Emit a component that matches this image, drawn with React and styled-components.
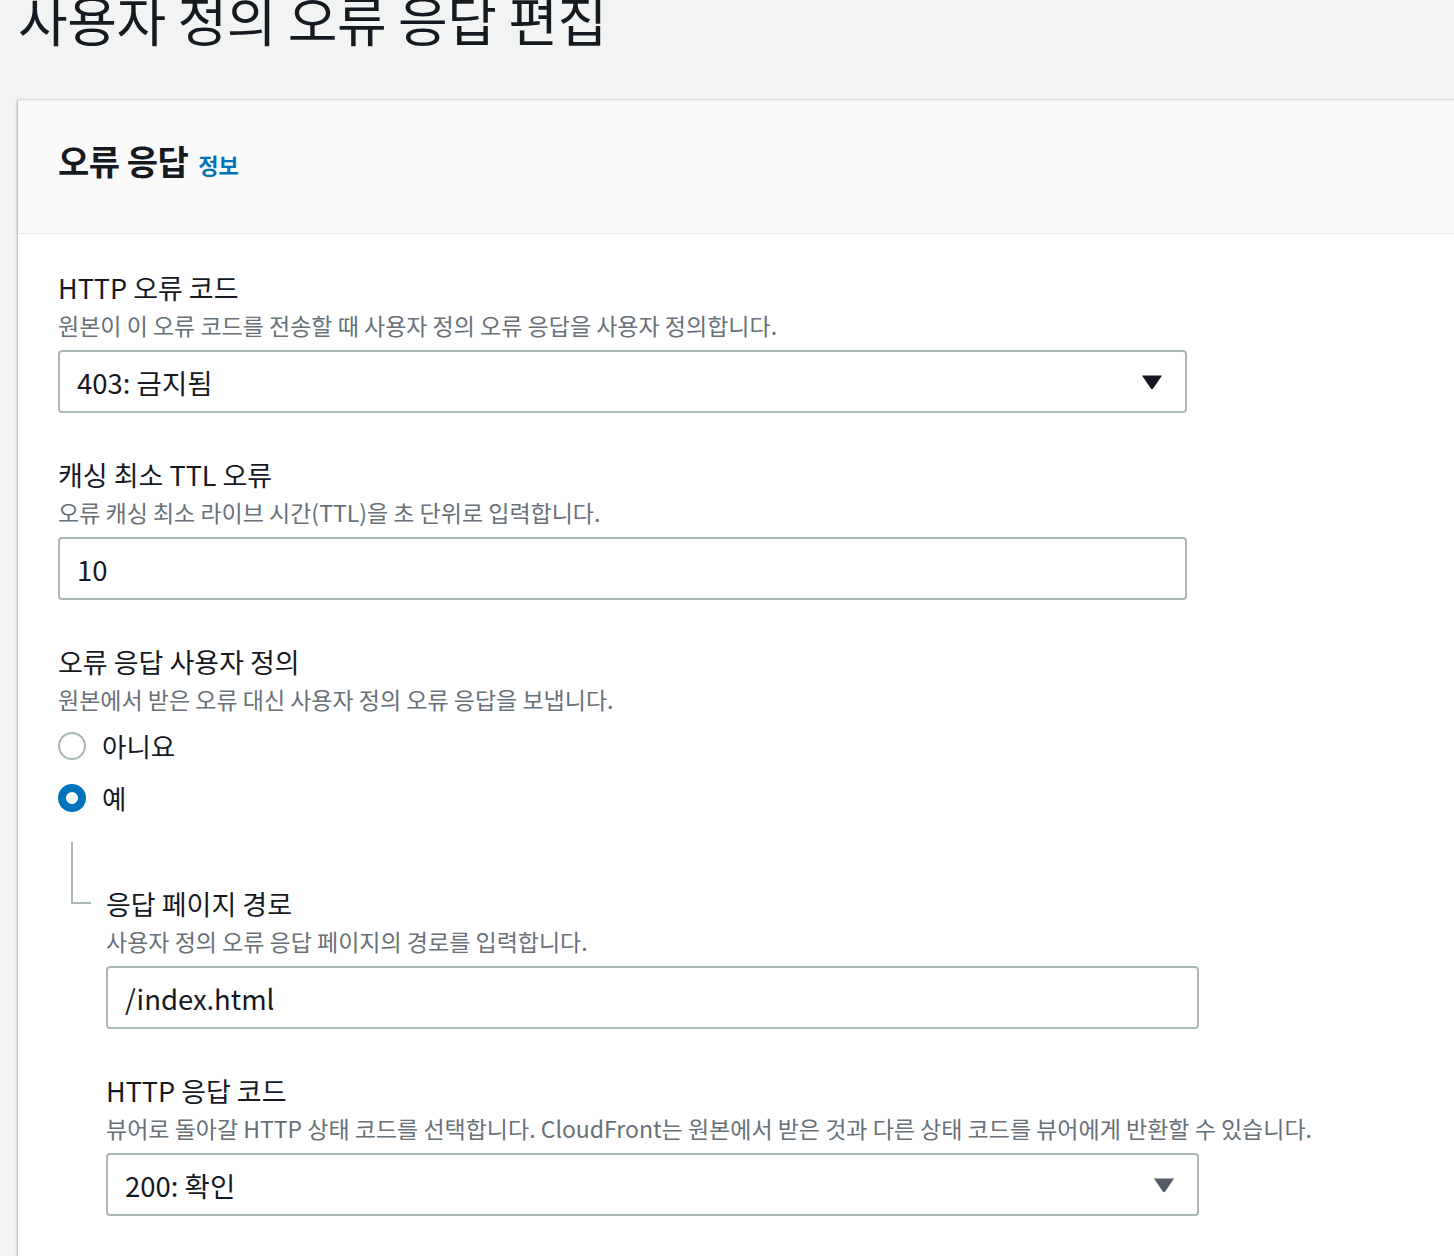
import React from "react";
import styled, { createGlobalStyle } from "styled-components";

const GlobalStyle = createGlobalStyle`
  html, body {
    margin: 0;
    padding: 0;
    background: #f2f3f3;
    overflow: hidden;
    font-family: "Noto Sans CJK KR", "Noto Sans", sans-serif;
    color: #16191f;
  }
`;

const Page = styled.div`
  padding-left: 18px;
  width: 1454px;
  height: 1256px;
  overflow: hidden;
`;

const Title = styled.h1`
  margin: -13px 0 0 0;
  font-size: 54px;
  font-weight: 400;
  line-height: 64px;
  height: 113px;
  letter-spacing: -0.4px;
  white-space: nowrap;
`;

const Card = styled.div`
  width: 1500px;
  background: #ffffff;
  box-shadow: -1px 0 2px rgba(0, 28, 36, 0.3);
  border-top: 1px solid #eaeded;
  padding-bottom: 120px;
`;

const CardHeader = styled.div`
  box-sizing: border-box;
  background: #fafafa;
  border-bottom: 1px solid #eaeded;
  height: 133px;
  display: flex;
  align-items: center;
  padding: 0 0 14px 40px;
  gap: 10px;
`;

const HeaderTitle = styled.h2`
  margin: 0;
  font-size: 34px;
  font-weight: 700;
  letter-spacing: -0.5px;
`;

const InfoLink = styled.a`
  color: #0073bb;
  font-size: 22px;
  font-weight: 700;
  margin-top: 8px;
  text-decoration: none;
`;

const CardBody = styled.div`
  padding: 35px 0 0 40px;
  display: flex;
  flex-direction: column;
`;

const Field = styled.div`
  display: flex;
  flex-direction: column;
  margin-bottom: ${(p) => p.$mb || 0}px;
`;

const Label = styled.div`
  font-size: 27px;
  line-height: 38px;
  color: #16191f;
`;

const Description = styled.div`
  font-size: 23px;
  line-height: 36px;
  color: #687078;
  margin-bottom: 7px;
  white-space: nowrap;
`;

const Control = styled.div`
  box-sizing: border-box;
  width: ${(p) => p.$w}px;
  height: 63px;
  border: 2px solid #aab7b8;
  border-radius: 4px;
  background: #fff;
  display: flex;
  align-items: center;
  justify-content: space-between;
  padding: 0 22px 0 17px;
  font-size: 27.5px;
  color: #16191f;
`;

const Arrow = styled.svg`
  width: 22px;
  height: 16px;
  fill: ${(p) => p.$color};
`;

const RadioGroup = styled.div`
  display: flex;
  flex-direction: column;
  gap: 24px;
  margin-top: 8px;
`;

const RadioRow = styled.label`
  display: flex;
  align-items: center;
  gap: 16px;
  font-size: 26.5px;
  line-height: 28px;
`;

const RadioCircle = styled.span`
  box-sizing: border-box;
  width: 28px;
  height: 28px;
  border-radius: 50%;
  border: ${(p) => (p.$checked ? "8px solid #0073bb" : "2px solid #aab7b8")};
  background: #fff;
`;

const Nested = styled.div`
  display: flex;
  margin-top: 30px;
`;

const Connector = styled.div`
  box-sizing: border-box;
  width: 20px;
  height: 62px;
  margin-left: 13px;
  margin-right: 15px;
  border-left: 2px solid #aab7b8;
  border-bottom: 2px solid #aab7b8;
  flex-shrink: 0;
`;

const NestedFields = styled.div`
  display: flex;
  flex-direction: column;
  margin-top: 43px;
`;

const ArrowIcon = ({ color }) => (
  <Arrow $color={color} viewBox="0 0 22 16">
    <path d="M1 1.5 L21 1.5 L12.2 14.5 Q11 16 9.8 14.5 Z" />
  </Arrow>
);

const App = () => (
  <>
    <GlobalStyle />
    <Page>
      <Title>사용자 정의 오류 응답 편집</Title>
      <Card>
        <CardHeader>
          <HeaderTitle>오류 응답</HeaderTitle>
          <InfoLink href="#">정보</InfoLink>
        </CardHeader>
        <CardBody>
          <Field $mb={43}>
            <Label>HTTP 오류 코드</Label>
            <Description>
              원본이 이 오류 코드를 전송할 때 사용자 정의 오류 응답을 사용자 정의합니다.
            </Description>
            <Control $w={1129}>
              <span>403: 금지됨</span>
              <ArrowIcon color="#16191f" />
            </Control>
          </Field>
          <Field $mb={43}>
            <Label>캐싱 최소 TTL 오류</Label>
            <Description>오류 캐싱 최소 라이브 시간(TTL)을 초 단위로 입력합니다.</Description>
            <Control $w={1129}>
              <span>10</span>
            </Control>
          </Field>
          <Field>
            <Label>오류 응답 사용자 정의</Label>
            <Description>원본에서 받은 오류 대신 사용자 정의 오류 응답을 보냅니다.</Description>
            <RadioGroup>
              <RadioRow>
                <RadioCircle />
                아니요
              </RadioRow>
              <RadioRow>
                <RadioCircle $checked />
                예
              </RadioRow>
            </RadioGroup>
          </Field>
          <Nested>
            <Connector />
            <NestedFields>
              <Field $mb={43}>
                <Label>응답 페이지 경로</Label>
                <Description>사용자 정의 오류 응답 페이지의 경로를 입력합니다.</Description>
                <Control $w={1093}>
                  <span>/index.html</span>
                </Control>
              </Field>
              <Field>
                <Label>HTTP 응답 코드</Label>
                <Description>
                  뷰어로 돌아갈 HTTP 상태 코드를 선택합니다. CloudFront는 원본에서 받은 것과 다른 상태 코드를 뷰어에게 반환할 수 있습니다.
                </Description>
                <Control $w={1093}>
                  <span>200: 확인</span>
                  <ArrowIcon color="#545b64" />
                </Control>
              </Field>
            </NestedFields>
          </Nested>
        </CardBody>
      </Card>
    </Page>
  </>
);

export default App;
